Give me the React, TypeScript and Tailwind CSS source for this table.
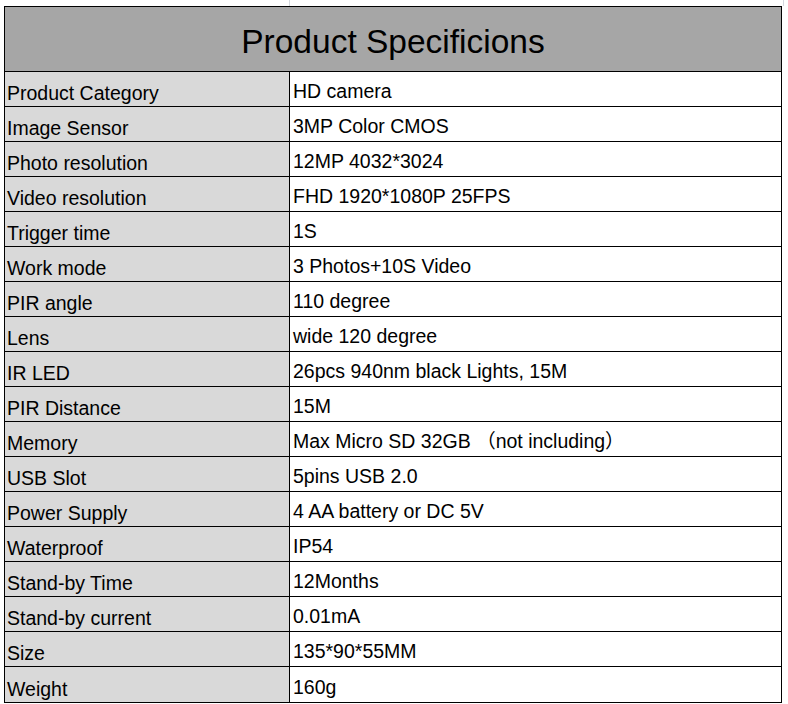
import { FC } from 'react';

const specs = [
  { label: 'Product Category', value: 'HD camera' },
  { label: 'Image Sensor', value: '3MP Color CMOS' },
  { label: 'Photo resolution', value: '12MP 4032*3024' },
  { label: 'Video resolution', value: 'FHD 1920*1080P 25FPS' },
  { label: 'Trigger time', value: '1S' },
  { label: 'Work mode', value: '3 Photos+10S Video' },
  { label: 'PIR angle', value: '110 degree' },
  { label: 'Lens', value: 'wide 120 degree' },
  { label: 'IR LED', value: '26pcs 940nm black Lights, 15M' },
  { label: 'PIR Distance', value: '15M' },
  { label: 'Memory', value: 'Max Micro SD 32GB （not including）' },
  { label: 'USB Slot', value: '5pins USB 2.0' },
  { label: 'Power Supply', value: '4 AA battery or DC 5V' },
  { label: 'Waterproof', value: 'IP54' },
  { label: 'Stand-by Time', value: '12Months' },
  { label: 'Stand-by current', value: '0.01mA' },
  { label: 'Size', value: '135*90*55MM' },
  { label: 'Weight', value: '160g' },
];

const App: FC = () => {
  return (
    <div className="bg-white pl-[4px] text-black" style={{ fontFamily: '"Liberation Sans", Arial, "Noto Sans CJK SC", sans-serif' }}>
      {/* sheet gridlines above the table */}
      <div className="flex h-[6px]">
        <div className="w-[285px]" />
        <div className="w-px bg-[#d4d8de]" />
        <div className="w-[493px]" />
        <div className="w-px bg-[#d4d8de]" />
      </div>

      <div className="w-[778px] border border-black">
        <div className="flex h-[65px] items-end justify-center border-b border-black bg-[#a6a6a6] pb-[13px] text-[33.5px] leading-none">
          Product Specificions
        </div>

        {specs.map((row, index) => (
          <div
            key={row.label}
            className={`grid h-[35px] grid-cols-[285px_1fr] ${index < specs.length - 1 ? 'border-b border-black' : ''}`}
          >
            <div className="flex items-end border-r border-black bg-[#d9d9d9] pb-[2px] pl-[2px] text-[19.5px] leading-[22px]">
              {row.label}
            </div>
            <div className="flex items-end pb-[4px] pl-[3px] text-[19.5px] leading-[22px]">{row.value}</div>
          </div>
        ))}
      </div>
    </div>
  );
};

export default App;
